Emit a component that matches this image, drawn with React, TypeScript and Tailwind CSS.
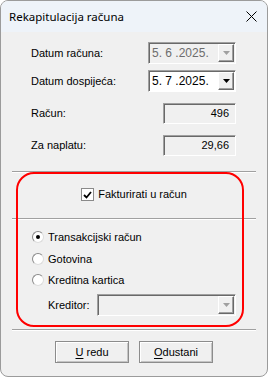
import React from "react";

const sunken =
  "border border-t-[#a0a0a0] border-l-[#a0a0a0] border-b-white border-r-white shadow-[inset_1px_1px_0_#696969]";

function Arrow({ disabled }: { disabled?: boolean }) {
  return (
    <svg width="7" height="4" viewBox="0 0 7 4">
      <path d="M0 0h7L3.5 4z" fill={disabled ? "#a0a0a0" : "#000"} />
    </svg>
  );
}

function Combo({ value, disabled, w }: { value: string; disabled?: boolean; w: string }) {
  return (
    <div className={`flex h-[22px] ${w} items-stretch p-[1px] ${sunken} ${disabled ? "bg-[#f0f0f0] text-[#6d6d6d]" : "bg-white text-black"}`}>
      <span className="flex flex-1 items-center pl-[2px] text-[12px] leading-none">{value}</span>
      <span className="flex w-[16px] items-center justify-center border border-t-white border-l-white border-b-[#696969] border-r-[#696969] bg-[#f0f0f0] shadow-[inset_-1px_-1px_0_#a0a0a0]">
        <Arrow disabled={disabled} />
      </span>
    </div>
  );
}

function Field({ value }: { value: string }) {
  return (
    <div className={`flex h-[21px] w-[73px] items-center justify-end bg-[#f0f0f0] pr-[6px] ${sunken}`}>
      {value}
    </div>
  );
}

function Separator() {
  return <div className="h-[2px] border-t border-t-[#a0a0a0] border-b border-b-white" />;
}

function Radio({ checked, label }: { checked?: boolean; label: string }) {
  return (
    <div className="flex h-[14px] items-center gap-[4px] pl-[20px]">
      <span className="flex h-[12px] w-[12px] items-center justify-center rounded-full border border-t-[#8a8a8a] border-l-[#8a8a8a] border-b-[#dcdcdc] border-r-[#dcdcdc] bg-white">
        {checked && <span className="h-[4px] w-[4px] rounded-full bg-black" />}
      </span>
      <span>{label}</span>
    </div>
  );
}

function Button({ mn, rest }: { mn: string; rest: string }) {
  return (
    <button className="flex h-[22px] w-[74px] items-center justify-center border border-[#8c8c8c] bg-[#f0f0f0] shadow-[inset_1px_1px_0_#ffffff,inset_-1px_-1px_0_#c4c4c4]">
      <span className="whitespace-pre">
        <span className="underline underline-offset-2">{mn}</span>
        {rest}
      </span>
    </button>
  );
}

export default function App() {
  return (
    <div className="h-[377px] w-[268px] bg-white">
      <div className="relative flex h-full flex-col overflow-hidden rounded-lg border border-[#9b9b9b] bg-[#f0f0f0] font-['Liberation_Sans',Arial,sans-serif] text-[11px] text-black">
        <div className="flex h-[31px] shrink-0 items-center justify-between bg-[#eef3f9] pl-[8px] pr-[10px]">
          <span className="font-['Noto_Sans',sans-serif] text-[11.5px]">Rekapitulacija računa</span>
          <svg width="11" height="11" viewBox="0 0 11 11">
            <path d="M0.5 0.5l10 10M10.5 0.5l-10 10" stroke="#000" strokeWidth="1" />
          </svg>
        </div>

        <div className="flex flex-col px-[11px]">
          <div className="mt-[10px] flex h-[22px] items-center justify-between pl-[19px] pr-[20px]">
            <span>Datum računa:</span>
            <Combo value="5. 6 .2025." disabled w="w-[88px]" />
          </div>
          <div className="mt-[6px] flex h-[22px] items-center justify-between pl-[19px] pr-[20px]">
            <span>Datum dospijeća:</span>
            <Combo value="5. 7 .2025." w="w-[88px]" />
          </div>
          <div className="mt-[11px] flex h-[21px] items-center justify-between pl-[19px] pr-[20px]">
            <span>Račun:</span>
            <Field value="496" />
          </div>
          <div className="mt-[11px] flex h-[21px] items-center justify-between pl-[19px] pr-[20px]">
            <span>Za naplatu:</span>
            <Field value="29,66" />
          </div>

          <div className="mt-[15px]">
            <Separator />
          </div>

          <div className="mt-[15px] flex h-[13px] items-center justify-center gap-[4px]">
            <span className="flex h-[13px] w-[13px] items-center justify-center border border-[#8a8a8a] bg-white">
              <svg width="9" height="8" viewBox="0 0 9 8">
                <path d="M1 4l2.5 2.5L8 1" stroke="#000" strokeWidth="1.8" fill="none" />
              </svg>
            </span>
            <span>Fakturirati u račun</span>
          </div>

          <div className="mt-[17px]">
            <Separator />
          </div>

          <div className="mt-[10px]">
            <Radio checked label="Transakcijski račun" />
          </div>
          <div className="mt-[8px]">
            <Radio label="Gotovina" />
          </div>
          <div className="mt-[7px]">
            <Radio label="Kreditna kartica" />
          </div>
          <div className="mt-[7px] flex h-[22px] items-center justify-between pl-[36px] pr-[20px]">
            <span>Kreditor:</span>
            <Combo value="" disabled w="w-[139px]" />
          </div>

          <div className="mt-[13px]">
            <Separator />
          </div>

          <div className="mt-[10px] flex justify-center gap-[10px]">
            <Button mn="U" rest=" redu" />
            <Button mn="O" rest="dustani" />
          </div>
        </div>

        <div className="pointer-events-none absolute left-[15px] top-[171px] h-[155px] w-[228px] rounded-[18px] border-2 border-[#ff0000]" />
      </div>
    </div>
  );
}
